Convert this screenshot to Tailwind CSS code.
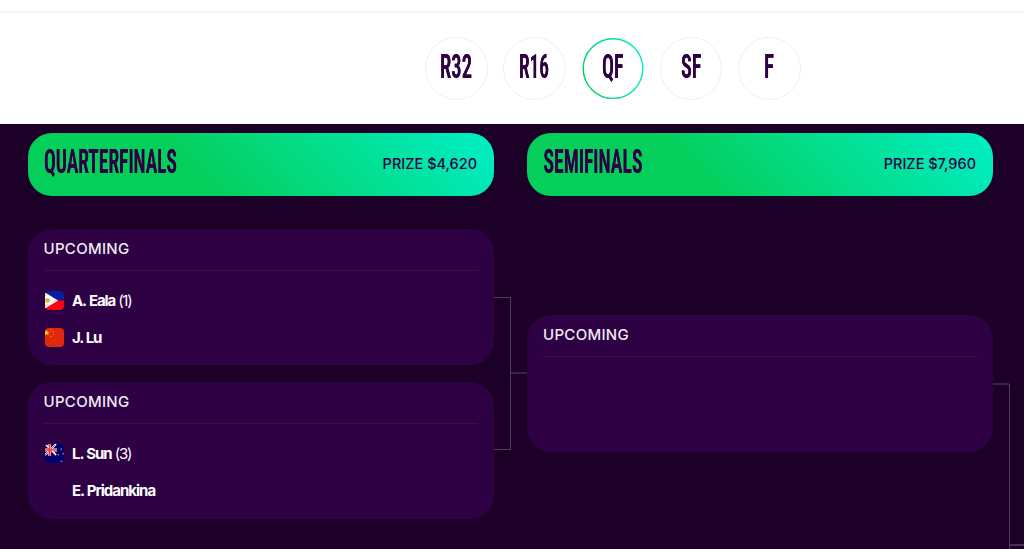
<!DOCTYPE html>
<html lang="en">
<head>
  <meta charset="UTF-8">
  <meta name="viewport" content="width=device-width, initial-scale=1.0">
  <title>Singles Draw</title>
  <script src="https://cdn.jsdelivr.net/npm/@tailwindcss/browser@4"></script>
</head>
<body class="h-screen overflow-hidden bg-[#1c0028] font-['Inter',sans-serif] text-[#2e0044]">
  <!-- Round picker -->
  <header class="h-[124px] bg-white pt-[11px]">
    <div class="border-t-2 border-[#f3f3f3]"></div>
    <nav class="ml-[425px] mt-6 flex gap-[15.8px] font-['Roboto',sans-serif] text-[33.5px] font-semibold font-stretch-75%">
      <button class="size-[62.5px] rounded-full border border-[#efefef]">
        <svg class="size-full overflow-visible drop-shadow-[0.8px_0_0_#2e0044]"><text x="14" y="40" textLength="32" lengthAdjust="spacingAndGlyphs" fill="#2e0044">R32</text></svg>
      </button>
      <button class="size-[62.5px] rounded-full border border-[#efefef]">
        <svg class="size-full overflow-visible drop-shadow-[0.8px_0_0_#2e0044]"><text x="15" y="40" textLength="30" lengthAdjust="spacingAndGlyphs" fill="#2e0044">R16</text></svg>
      </button>
      <button class="relative size-[62.5px] rounded-full">
        <svg class="absolute inset-0 size-full" viewBox="0 0 62.5 62.5">
          <defs>
            <linearGradient id="ring" x1="0" y1="0.6" x2="1" y2="0.3">
              <stop offset="0" stop-color="#05cf5b" />
              <stop offset="1" stop-color="#00efc8" />
            </linearGradient>
          </defs>
          <circle cx="31" cy="31.6" r="29.8" fill="none" stroke="url(#ring)" stroke-width="1.4" />
        </svg>
        <svg class="size-full overflow-visible drop-shadow-[0.8px_0_0_#2e0044]"><text x="20" y="41" textLength="21.5" lengthAdjust="spacingAndGlyphs" fill="#2e0044">QF</text></svg>
      </button>
      <button class="size-[62.5px] rounded-full border border-[#efefef]">
        <svg class="size-full overflow-visible drop-shadow-[0.8px_0_0_#2e0044]"><text x="20" y="40" textLength="20.5" lengthAdjust="spacingAndGlyphs" fill="#2e0044">SF</text></svg>
      </button>
      <button class="size-[62.5px] rounded-full border border-[#efefef]">
        <svg class="size-full overflow-visible drop-shadow-[0.8px_0_0_#2e0044]"><text x="25" y="40" textLength="10" lengthAdjust="spacingAndGlyphs" fill="#2e0044">F</text></svg>
      </button>
    </nav>
  </header>

  <main class="relative flex gap-[33px] pl-[27.5px] pt-[8.5px]">
    <!-- Quarterfinals -->
    <section class="w-[466.5px] shrink-0">
      <div class="flex h-[63px] items-center justify-between rounded-3xl bg-[linear-gradient(45deg,#05cf5b_0%,#05cf5b_36%,#00efc8_100%)] pl-4 pr-[17px]">
        <svg class="h-[63px] w-[150px] overflow-visible font-['Roboto',sans-serif] text-[33.5px] font-semibold font-stretch-75% drop-shadow-[0.8px_0_0_#2e0044]"><text x="0" y="40" textLength="133" lengthAdjust="spacingAndGlyphs" fill="#2e0044">QUARTERFINALS</text></svg>
        <span class="text-[14.5px] font-[450]">PRIZE $4,620</span>
      </div>

      <div class="mt-[33px] h-[136.5px] rounded-3xl bg-[#2e0044] px-4 pt-[11px]">
        <h3 class="h-[31px] border-b border-[#3c1050] text-[15px] font-medium leading-[18px] tracking-[0.3px] text-[#f0ebf2]">UPCOMING</h3>
        <div class="mt-5 flex h-5 items-center gap-2 pl-[1.5px] text-[15px] text-white">
          <svg class="size-[19px] rounded" viewBox="0 0 19 19">
            <path d="M0 0h19v9.5H0z" fill="#0b1c9c" />
            <path d="M0 9.5h19V19H0z" fill="#f90516" />
            <path d="M0 1.5 13 9.5 0 17.5z" fill="#fff" />
            <circle cx="2.5" cy="9.5" r="2.4" fill="#e9b13d" />
            <path d="M0 3.5h1.2v1.5H0zM0 14h1.2v1.5H0zM9.5 9h1.5v1H9.5z" fill="#edc45d" />
          </svg>
          <span class="pt-0.5"><b class="tracking-[-1.1px] [word-spacing:1px]">A. Eala</b><span class="ml-[3px] tracking-[-1.3px]">(1)</span></span>
        </div>
        <div class="mt-[17px] flex h-5 items-center gap-2 pl-[1.5px] text-[15px] text-white">
          <svg class="size-[19px] rounded" viewBox="0 0 19 19">
            <path d="M0 0h19v19H0z" fill="#e0280f" />
            <path d="m1.8 2 .7 2h2L3 5.3l.6 2-1.8-1.2L0 7.3V3.5z" fill="#ffd500" />
            <path d="M5.5 1.5H7v1H5.5zM7.7 3.2h1.2v1.2H7.7zM7.7 5.9h1.2v1.2H7.7zM5.5 8H7v1H5.5z" fill="#f08a0a" />
          </svg>
          <b class="pt-0.5 tracking-[-1.1px] [word-spacing:0.6px]">J. Lu</b>
        </div>
      </div>

      <div class="mt-[16.5px] h-[137px] rounded-3xl bg-[#2e0044] px-4 pt-[11px]">
        <h3 class="h-[31px] border-b border-[#3c1050] text-[15px] font-medium leading-[18px] tracking-[0.3px] text-[#f0ebf2]">UPCOMING</h3>
        <div class="mt-5 flex h-5 items-center gap-2 pl-[1.5px] text-[15px] text-white">
          <svg class="size-[19px] rounded" viewBox="0 0 19 19">
            <path d="M0 0h19v19H0z" fill="#00006b" />
            <path d="m0 0 11 11M11 0 0 11" stroke="#fff" stroke-width="1.8" />
            <path d="M4.7 0v12M0 6h12" stroke="#fff" stroke-width="2.8" />
            <path d="m0 1 10 10M10 1 0 11" stroke="#e8414f" stroke-width=".9" />
            <path d="M4.7 0v12M0 6h12" stroke="#f0303c" stroke-width="1.7" />
            <path d="M15.5 4.5H17V6h-1.5zM12.5 10H14v1.5h-1.5zM17.5 9H19v1.5h-1.5zM15.5 16.5h1.7V18h-1.7z" fill="#b66a91" />
          </svg>
          <span class="pt-0.5"><b class="tracking-[-1px] [word-spacing:0.6px]">L. Sun</b><span class="ml-[3px] tracking-[-1.2px]">(3)</span></span>
        </div>
        <div class="mt-[17px] flex h-5 items-center pl-[28.5px] text-[15px] text-white">
          <b class="pt-0.5 tracking-[-1px] [word-spacing:0.6px]">E. Pridankina</b>
        </div>
      </div>
    </section>

    <!-- Semifinals -->
    <section class="w-[466px] shrink-0">
      <div class="flex h-[63px] items-center justify-between rounded-3xl bg-[linear-gradient(45deg,#05cf5b_0%,#05cf5b_36%,#00efc8_100%)] pl-4 pr-[17px]">
        <svg class="h-[63px] w-[150px] overflow-visible font-['Roboto',sans-serif] text-[33.5px] font-semibold font-stretch-75% drop-shadow-[0.8px_0_0_#2e0044]"><text x="0.5" y="40" textLength="99" lengthAdjust="spacingAndGlyphs" fill="#2e0044">SEMIFINALS</text></svg>
        <span class="text-[14.5px] font-[450]">PRIZE $7,960</span>
      </div>

      <div class="mt-[119.5px] h-[136.5px] rounded-3xl bg-[#2e0044] px-4 pt-[11px]">
        <h3 class="h-[30.5px] border-b border-[#3c1050] text-[15px] font-medium leading-[18px] tracking-[0.3px] text-[#f0ebf2]">UPCOMING</h3>
      </div>
    </section>

    <!-- Bracket connectors -->
    <svg class="pointer-events-none absolute left-0 top-0 h-[425px] w-[1024px]" fill="none" shape-rendering="crispEdges">
      <path d="M494 173.5h16.5v152H494" stroke="#553a60" />
      <path d="M511 249h16" stroke="#3b2049" stroke-width="2" />
      <path d="M993 260h16" stroke="#3b2049" stroke-width="2" />
      <path d="M1009.5 260v165" stroke="#553a60" />
      <path d="M1010 421h14" stroke="#492e57" stroke-width="2" />
    </svg>
  </main>
</body>
</html>
